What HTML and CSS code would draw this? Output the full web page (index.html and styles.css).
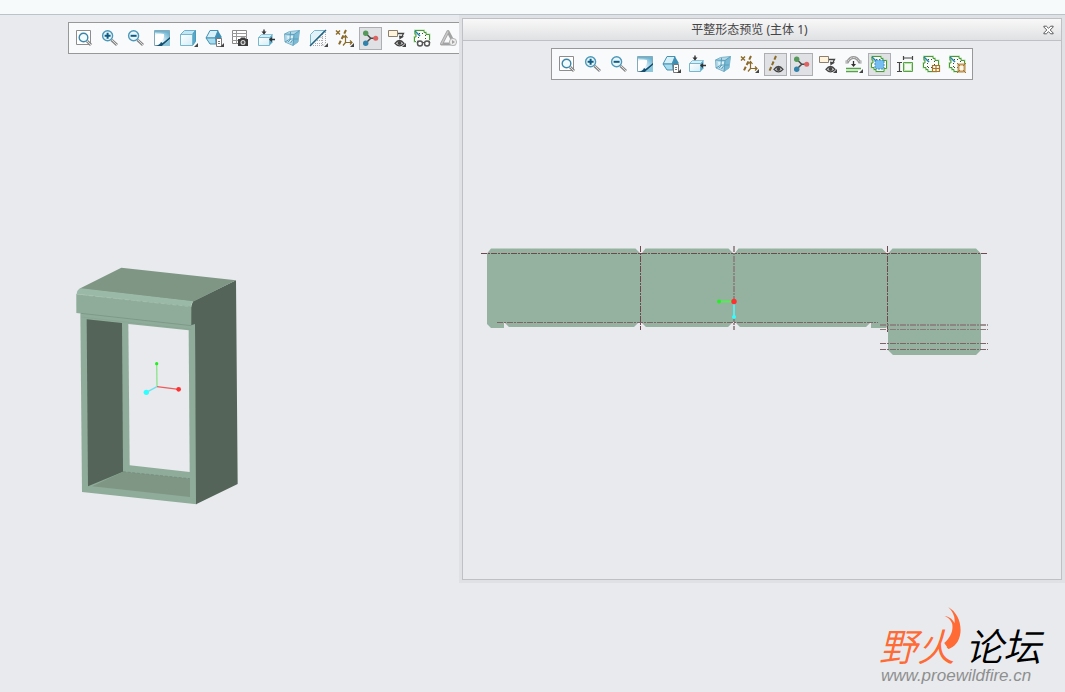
FILE: index.html
```html
<!DOCTYPE html>
<html lang="zh-CN">
<head>
  <meta charset="UTF-8">
  <meta name="viewport" content="width=device-width, initial-scale=1.0">
  <title>平整形态预览</title>
  <link rel="stylesheet" href="styles.css">
</head>
<body>
  <!-- shared icons -->
  <svg class="defs" aria-hidden="true">
    <defs>
      <linearGradient id="gBlue" x1="1" y1="0" x2="0" y2="1">
        <stop offset="0" stop-color="#4ba3c7"/><stop offset=".6" stop-color="#e4f4fa"/><stop offset="1" stop-color="#fff"/>
      </linearGradient>
      <linearGradient id="gFace" x1="0" y1="0" x2="1" y2="1">
        <stop offset="0" stop-color="#fff"/><stop offset="1" stop-color="#d3edf7"/>
      </linearGradient>
    </defs>
    <symbol id="more" viewBox="0 0 21 21"><path d="M20 15v4h-4z" fill="#444"/></symbol>
    <symbol id="eye" viewBox="0 0 21 21">
      <path d="M9 15.300q4.500-5.600 9 0q-4.500 5.200-9 0z" fill="#fff" stroke="#444" stroke-width="1.300"/>
      <circle cx="13.500" cy="15" r="2.100" fill="#444"/>
    </symbol>
    <symbol id="fit" viewBox="0 0 21 21">
      <path d="M2.500 2.500h14v14h-14z" fill="#fff" stroke="#8d8d8d"/>
      <path d="M13 13l4 4" stroke="#888" stroke-width="3"/><path d="M13 13l4 4" stroke="#ddd"/>
      <circle cx="9.500" cy="9.500" r="4.300" fill="#f1fafe" stroke="#3b86a8" stroke-width="1.400"/>
    </symbol>
    <symbol id="lens" viewBox="0 0 21 21">
      <path d="M11.500 12l5.500 5" stroke="#888" stroke-width="3"/><path d="M12 12l5 5" stroke="#ddd"/>
      <circle cx="7.600" cy="7.800" r="5" fill="#e9f6fb" stroke="#4d98b8" stroke-width="1.400"/>
    </symbol>
    <symbol id="zoomin" viewBox="0 0 21 21"><use href="#lens"/><path d="M4.600 7.800h6M7.600 4.800v6" stroke="#0d5c85" stroke-width="2"/></symbol>
    <symbol id="zoomout" viewBox="0 0 21 21"><use href="#lens"/><path d="M4.600 7.800h6" stroke="#0d5c85" stroke-width="2"/></symbol>
    <symbol id="repaint" viewBox="0 0 21 21">
      <path d="M2.500 2.500h15v15h-15z" fill="url(#gBlue)" stroke="#86a9b7"/>
      <path d="M2 3h16v1.500H2z" fill="#6fb3ce"/>
      <path d="M3 17V7q3-2 9-1 1 5-4 9z" fill="#fff"/>
      <path d="M3 18q5-1 6-4l1.500 1 7.500-6v2l-8 7z" fill="#14506f"/>
      <path d="M10 18l8-7v7z" fill="#8dc6db"/>
    </symbol>
    <symbol id="cube" viewBox="0 0 21 21">
      <path d="M2.500 6.500l4-4h11l-3 4z" fill="#c3e6f3" stroke="#6fb1cc"/>
      <path d="M14.500 6.500l3-4v11l-3 4z" fill="#58a9c9" stroke="#4a9cbd"/>
      <path d="M2.500 6.500h12v11h-12z" fill="url(#gFace)" stroke="#79b7cf"/>
    </symbol>
    <symbol id="orient" viewBox="0 0 21 21">
      <path d="M2 10l4-7.500h8l-3 7.500z" fill="#d9f0f8" stroke="#4592b2"/>
      <path d="M2 10h10v6H6z" fill="#a9dcef" stroke="#4592b2"/>
      <path d="M11 10l3-7.500 3.500 6V15H12z" fill="#3f8fb4"/>
      <path d="M12.500 10.500h5v8h-5z" fill="#fff" stroke="#777"/>
      <path d="M14 13.500h2M14 15.500h2" stroke="#777"/>
    </symbol>
    <symbol id="views" viewBox="0 0 21 21">
      <path d="M2.500 2.500h14v13h-14z" fill="#fff" stroke="#8a8a8a"/>
      <path d="M2 5.500h15M2 8.500h15M2 12.500h8M6.500 3v13" stroke="#999"/>
      <path d="M8 11h2l1-1.500h4l1 1.500h2v7H8z" fill="#3b3b3b"/>
      <circle cx="13" cy="14.500" r="2.500" fill="#ddd"/><circle cx="13" cy="14.500" r="1.400" fill="#555"/>
    </symbol>
    <symbol id="arrows" viewBox="0 0 21 21">
      <path d="M2.500 9.500l3-3h11l-3 3z" fill="#d5eef7" stroke="#8cc4da"/>
      <path d="M13.500 9.500l3-3v8l-3 3z" fill="#58a9c9"/>
      <path d="M2.500 9.500h11v8h-11z" fill="url(#gFace)" stroke="#79b7cf"/>
      <path d="M8 1.500v4M14 11.500h5" stroke="#333" stroke-width="1.400"/>
      <path d="M5.500 3.500h5L8 6.500zM16 9v5l-3-2.500z" fill="#333"/>
    </symbol>
    <symbol id="glass" viewBox="0 0 21 21">
      <path d="M2.500 6l5-2.500 10-1-1.500 11.500-5 3.500L3 14z" fill="#b4d9e8" stroke="#7fb5cc"/>
      <path d="M12 6.500l5.500-4L16 14l-5 3.500z" fill="#79b9d3"/>
      <path d="M5 8h6l-1 5-4 .500z" fill="#e0f1f7"/>
      <path d="M2.500 6l9.500.500 5.500-4M12 6.500l-1 11M3 14l5-3h8M8 11l.500-7M6 14l3-3M8.500 15l2-3" fill="none" stroke="#5a9fbc"/>
    </symbol>
    <symbol id="section" viewBox="0 0 21 21">
      <path d="M2.500 17V6.500l4-4h10z" fill="#e1f2f8" stroke="#79b7cf"/>
      <path d="M14.500 6v11.500H4M17.500 4v11l-3 3M7 15.500h7M9 12.500h5M11.500 9.500h3" fill="none" stroke="#aaa" stroke-dasharray="1 1"/>
      <path d="M2 18L18 2" stroke="#24637f" stroke-width="1.400"/>
    </symbol>
    <symbol id="datum" viewBox="0 0 21 21">
      <path d="M2 2.500l4 4M6 2.500l-4 4" stroke="#8a6a26" stroke-width="1.400"/>
      <path d="M12 2L4.500 17.500" stroke="#8a6a26" stroke-width="2" stroke-dasharray="4 2"/>
      <path d="M11.500 8v6.500H18M9.500 10l2-2.500 2 2.500M16 12.500l2 2-2 2M11.500 14.500l-2.500 3" fill="none" stroke="#8a6a26" stroke-width="1.200"/>
    </symbol>
    <symbol id="spin" viewBox="0 0 21 21">
      <path d="M5.700 5.300l5 5-5 5M10.700 10.300h5" fill="none" stroke="#4a4a4a" stroke-width="1.500"/>
      <circle cx="5.700" cy="5.300" r="2.700" fill="#55995a"/>
      <circle cx="5.700" cy="15.300" r="2.700" fill="#3382ab"/>
      <circle cx="15.700" cy="10.300" r="2.500" fill="#dc6464"/>
    </symbol>
    <symbol id="note" viewBox="0 0 21 21">
      <path d="M2.500 2.500h9v6h-9z" fill="#fff3dc" stroke="#8a7f70"/>
      <path d="M12 5.500h5.500l-2 4" fill="none" stroke="#444" stroke-width="1.300"/>
      <path d="M13 7.500l5 1-4.500 3z" fill="#444"/><use href="#eye"/>
    </symbol>
    <symbol id="flat" viewBox="0 0 21 21">
      <path d="M3 2.500h9v2h2v2h3.500v8H15v3H7v-2H5v-2H2.500V9H4V6H3z" fill="#fff" stroke="#b9e3ab" stroke-width="2"/>
      <path d="M3 2.500h9v2h2v2h3.500v8H15v3H7v-2H5v-2H2.500V9H4V6H3z" fill="#fbfdf9" stroke="#4a9a3a"/>
      <path d="M7 5.500h6M7 13.500h7M6.500 6v7M13.500 7v6" fill="none" stroke="#444" stroke-dasharray="1 2"/>
      <path d="M3 3l5 5" stroke="#2283b0" stroke-width="1.500"/>
    </symbol>
    <symbol id="flatview" viewBox="0 0 21 21">
      <use href="#flat"/><path d="M4 12h15v7H4z" fill="#f9fafc"/>
      <g fill="#fff" stroke="#555" stroke-width="1.400"><circle cx="8" cy="15.500" r="2.500"/><circle cx="15" cy="15.500" r="2.500"/></g>
      <path d="M5 15l1-2.500M10.500 14.500h2M18 15l-1-2.500" stroke="#555"/>
    </symbol>
    <symbol id="warn" viewBox="0 0 21 21">
      <path d="M10 3.500L3.500 16h13z" fill="none" stroke="#a3a3a3" stroke-width="3" stroke-linejoin="round"/>
      <path d="M10 3.500L3.500 16" fill="none" stroke="#cacaca" stroke-width="1.500"/>
      <circle cx="15" cy="14" r="3.600" fill="#eee" stroke="#b5b5b5"/><path d="M14 12l3 2-3 2z" fill="#a3a3a3"/>
    </symbol>
    <symbol id="bendline" viewBox="0 0 21 21">
      <path d="M11 2L4 18" stroke="#8a6a26" stroke-width="2" stroke-dasharray="4 2"/><use href="#eye"/>
    </symbol>
    <symbol id="bend" viewBox="0 0 21 21">
      <path d="M2.500 8h2q2.500-4.500 6-4.500t6 4.500h2" fill="none" stroke="#999" stroke-width="3"/>
      <path d="M2.500 8h2q2.500-4.500 6-4.500t6 4.500h2" fill="none" stroke="#e2e2e2" stroke-dasharray="2 1"/>
      <path d="M10.500 7v4" stroke="#333" stroke-width="1.300"/><path d="M8 10h5l-2.500 3z" fill="#333"/>
      <path d="M3 14.500h15M3 17.500h12" stroke="#55a345" stroke-width="1.400"/>
    </symbol>
    <symbol id="flatblue" viewBox="0 0 21 21">
      <use href="#flat"/><path d="M7 6h7v1h1v7h-1v1H7v-1H6V7h1z" fill="#76bdf0" stroke="#3f91c9" stroke-dasharray="2 1"/>
    </symbol>
    <symbol id="dims" viewBox="0 0 21 21">
      <path d="M8.500 8.500h9v9h-9z" fill="#f6faf4" stroke="#55a345"/>
      <path d="M9.500 9.500h7v7h-7z" fill="none" stroke="#b9e3ab"/>
      <path d="M2 8.500h5M2 17.500h5M4.500 8.500v9M8.500 2v4M17.500 2v4M8.500 4h9" stroke="#444" stroke-width="1.200"/>
    </symbol>
    <symbol id="flattable" viewBox="0 0 21 21">
      <use href="#flat"/><path d="M11.500 11.500h7v6h-7zM11 14.500h7M15 12v6" fill="#fff8e8" stroke="#a8752d" stroke-width="1.200"/>
    </symbol>
    <symbol id="flatframe" viewBox="0 0 21 21">
      <use href="#flat"/><path d="M11.500 10.500h6v7h-6z" fill="#fff8e8" stroke="#c39a60" stroke-width="2"/>
      <path d="M10 9l3 3M19 9l-3 3M10 19l3-3M19 19l-3-3" stroke="#a8752d"/>
    </symbol>
  </svg>

  <header class="top-strip"></header>

  <main class="workspace">
    <section class="model-pane">
      <div class="toolbar toolbar-main">
        <button aria-label="重新调整"><svg><use href="#fit"/></svg></button>
        <button aria-label="放大"><svg><use href="#zoomin"/></svg></button>
        <button aria-label="缩小"><svg><use href="#zoomout"/></svg></button>
        <button aria-label="重画"><svg><use href="#repaint"/></svg></button>
        <button aria-label="显示样式"><svg><use href="#cube"/><use href="#more"/></svg></button>
        <button aria-label="已保存方向"><svg><use href="#orient"/><use href="#more"/></svg></button>
        <button aria-label="视图管理器"><svg><use href="#views"/></svg></button>
        <button aria-label="视图法向"><svg><use href="#arrows"/></svg></button>
        <button aria-label="透视图"><svg><use href="#glass"/></svg></button>
        <button aria-label="截面"><svg><use href="#section"/><use href="#more"/></svg></button>
        <button aria-label="基准显示"><svg><use href="#datum"/><use href="#more"/></svg></button>
        <button class="active" aria-label="旋转中心"><svg><use href="#spin"/></svg></button>
        <button aria-label="注释显示"><svg><use href="#note"/><use href="#more"/></svg></button>
        <button aria-label="平整形态"><svg><use href="#flatview"/></svg></button>
        <button aria-label="模拟" disabled><svg><use href="#warn"/></svg></button>
      </div>

      <svg class="model" viewBox="0 0 552 750" role="img" aria-label="三维模型">
        <path fill="#8fac9a" d="M43 155L388 190 392 733 48 696z"/>
        <path fill="#546458" d="M62 178L168 189 171 635 66 679z"/>
        <path fill="#7f9685" d="M171 635L372 656V711L78 679z"/>
        <path fill="#e8eaee" d="M187 192L368 211 371 636 191 616z"/>
        <path fill="#546458" d="M381 124L510 61 515 672 390 733 387 192 375 196V140z"/>
        <path fill="#7f9685" d="M40 86L166 23 510 61 381 125z"/>
        <path fill="#9bb9a7" d="M32 102Q33 88 44 85L381 124Q376 130 376 140z"/>
        <path fill="#8fac9a" d="M31 102L376 139V196L31 159z"/>
        <path fill="none" stroke="#a6c2b1" stroke-width="2" stroke-dasharray="12 6" d="M33 103L376 140"/>
        <path fill="none" stroke="#769080" stroke-width="2" d="M45 160L376 197"/>
        <path fill="none" stroke="#809b8b" stroke-width="1" d="M46 171L376 208"/>
        <path fill="none" stroke="#6f8777" stroke-width="2" stroke-dasharray="9 5" d="M171 635L372 656"/>
        <path stroke="#8ce68a" stroke-width="4" d="M273 380L272 311"/>
        <path stroke="#f05a5a" stroke-width="4" d="M273 380L338 388"/>
        <path stroke="#67e4ee" stroke-width="4" d="M273 380L241 397"/>
        <circle cx="272" cy="311" r="5" fill="#22f022"/>
        <circle cx="338" cy="388" r="7" fill="#ff3030"/>
        <circle cx="241" cy="397" r="8" fill="#30ffff"/>
      </svg>
    </section>

    <section class="preview">
      <div class="preview-header">
        <h1>平整形态预览 (主体 1)</h1>
        <button class="close" aria-label="关闭">
          <svg viewBox="0 0 13 11"><path d="M1 1h3l2.500 2.500L9 1h3v1L8.500 5.500 12 9v1H9L6.500 7.500 4 10H1V9l3.500-3.500L1 2z" fill="#fff" stroke="#444"/></svg>
        </button>
      </div>
      <div class="toolbar toolbar-preview">
        <button aria-label="重新调整"><svg><use href="#fit"/></svg></button>
        <button aria-label="放大"><svg><use href="#zoomin"/></svg></button>
        <button aria-label="缩小"><svg><use href="#zoomout"/></svg></button>
        <button aria-label="重画"><svg><use href="#repaint"/></svg></button>
        <button aria-label="已保存方向"><svg><use href="#orient"/><use href="#more"/></svg></button>
        <button aria-label="视图法向"><svg><use href="#arrows"/></svg></button>
        <button aria-label="透视图"><svg><use href="#glass"/></svg></button>
        <button aria-label="基准显示"><svg><use href="#datum"/><use href="#more"/></svg></button>
        <button class="active" aria-label="折弯线"><svg><use href="#bendline"/></svg></button>
        <button class="active" aria-label="旋转中心"><svg><use href="#spin"/></svg></button>
        <button aria-label="注释显示"><svg><use href="#note"/><use href="#more"/></svg></button>
        <button aria-label="折弯顺序"><svg><use href="#bend"/><use href="#more"/></svg></button>
        <button class="active" aria-label="固定几何"><svg><use href="#flatblue"/></svg></button>
        <button aria-label="边界尺寸"><svg><use href="#dims"/></svg></button>
        <button aria-label="平整表"><svg><use href="#flattable"/></svg></button>
        <button aria-label="平整实例"><svg><use href="#flatframe"/></svg></button>
      </div>

      <svg class="flat-pattern" viewBox="0 0 524 122" role="img" aria-label="平整形态">
        <path fill="#95b1a0" d="M15 8.500H159.500L164 13H166L169.500 8.500H252.500L257 13H259L262.500 8.500H406L410.500 13H412.500L416.500 8.500H500L505 13.500V110L500 115H417L412 110V86L410 88H395V82L390 87H264L259 82H257L252 87H170L165 82H163L158 87H33L28 82V88H15L11 84V13.500z"/>
        <g fill="none" stroke="#70494f" stroke-dasharray="6 1 2 1">
          <path d="M5 13.500H512M164.500 6V90M411.500 6V93"/>
          <path d="M21 82.500H402M404 103.500H512M404 109.500H512" stroke="#7f6467"/>
          <path d="M404 89.500H512" stroke="#8b7a79"/>
          <path d="M258 6V90M404 85H512" stroke="#8b7a79" stroke-width="2" stroke-opacity=".8"/>
        </g>
        <path d="M258 61.500H243" stroke="#55ed55" stroke-width="2"/>
        <path d="M258 62V77" stroke="#5de9ed" stroke-width="2"/>
        <circle cx="243" cy="61.500" r="2" fill="#25ef25"/>
        <circle cx="258" cy="77" r="2" fill="#30ffff"/>
        <circle cx="258" cy="61.500" r="2.700" fill="#ff3030"/>
      </svg>
    </section>
  </main>

  <footer class="footer">
    <div class="brand">
      <div class="brand-name"><span class="wild">野火</span><span>论坛</span></div>
      <svg class="flame" viewBox="0 0 50 130" aria-hidden="true">
        <path fill="#ff6a35" d="M0 109C20 92 28 70 24 51 20 37 10 31 1 27 14 29 26 36 31 49 34 30 26 14 12 0 38 15 52 45 49 77 46 104 32 121 13 127z"/>
      </svg>
      <a class="brand-url" href="#">www.proewildfire.cn</a>
    </div>
  </footer>
</body>
</html>
```
FILE: styles.css
```css
* {
  box-sizing: border-box;
}
body {
  margin: 0;
  min-height: 100vh;
  display: flex;
  flex-direction: column;
  background-color: #e8eaee;
  font-family: "Noto Sans", "Noto Sans CJK SC", sans-serif;
  font-size: 12px;
  color: #444;
}
svg {
  display: block;
}
.defs {
  position: absolute;
  width: 0;
  height: 0;
}
.top-strip {
  height: 15px;
  background-color: #f7fafa;
  border-bottom: 1px solid #b8c4ca;
}
.workspace {
  flex: 1;
  display: grid;
  grid-template-columns: 459fr 606fr;
}
.model-pane {
  min-width: 0;
  overflow: hidden;
  padding: 7px 0 0 68px;
}
.toolbar {
  display: flex;
  gap: 3px;
  width: max-content;
  padding: 4px 3px 3px 4px;
  background-color: #f9fafc;
  border: 1px solid #989898;
}
.toolbar-main {
  padding-right: 40px;
}
.toolbar button {
  width: 23px;
  height: 23px;
  padding: 0;
  border: 1px solid transparent;
  background: none;
}
.toolbar button.active {
  background-color: #dfe1e4;
  border-color: #adafb2;
}
.toolbar svg {
  width: 21px;
  height: 21px;
}
.model {
  width: 184px;
  height: 250px;
  margin: 206px 0 0 -2px;
}
.preview {
  min-width: 0;
  margin: 3px;
  border: 1px solid #bfc0c5;
  box-shadow: 0 0 0 3px #e0e1e5;
}
.preview-header {
  display: flex;
  align-items: center;
  height: 22px;
  background: linear-gradient(#f8f8f8, #e0e1e3);
  border-bottom: 1px solid #bfc0c5;
}
.preview-header h1 {
  flex: 1;
  margin: 0;
  font-size: 12px;
  font-weight: normal;
  line-height: 20px;
  text-align: center;
}
.close {
  width: 25px;
  height: 20px;
  padding: 0 7px;
  border: 0;
  background: none;
}
.close svg {
  width: 11px;
  height: 10px;
}
.toolbar-preview {
  margin: 7px auto 0;
}
.flat-pattern {
  width: 524px;
  height: 122px;
  margin: 160px 0 0 13px;
}
.footer {
  display: flex;
  justify-content: flex-end;
  padding: 24px 20px 8px 0;
}
.brand {
  position: relative;
  width: 166px;
}
.brand-name {
  display: flex;
  gap: 10px;
  font-family: "Noto Sans CJK SC", sans-serif;
  font-size: 38px;
  font-weight: 350;
  font-style: italic;
  line-height: 40px;
  padding: 18px 0 2px;
  color: #000;
}
.wild {
  color: #ff6a35;
}
/* flame sits over the right stroke of the second character */
.flame {
  position: absolute;
  left: 65px;
  top: 0;
  width: 17px;
  height: 43px;
}
.brand-url {
  display: block;
  padding-left: 2px;
  font-family: "Liberation Sans", Arial, sans-serif;
  font-size: 17px;
  font-style: italic;
  line-height: 17px;
  color: #8f8f8f;
  text-decoration: none;
}
```
